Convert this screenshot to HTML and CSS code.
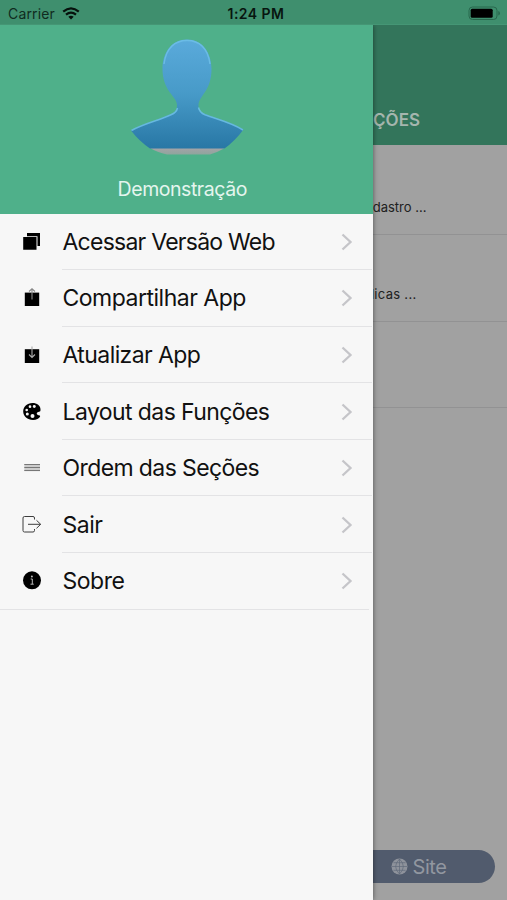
FILE: index.html
```html
<!DOCTYPE html>
<html lang="pt-BR">
<head>
<meta charset="utf-8">
<title>Menu</title>
<link rel="stylesheet" href="styles.css">
</head>
<body>
<div class="screen">
  <header class="status">
    <div class="carrier"><span>Carrier</span>
      <svg class="wifi" width="18" height="13" viewBox="0 0 18 13" fill="none" stroke="#06110c" stroke-width="2.2"><path d="M1.2 4.7Q9-1.8 16.8 4.7M4 7.7Q9 3.5 14 7.7"/><path d="M6.3 9.8Q9 7.8 11.7 9.8L9 12.6Z" fill="#06110c" stroke="none"/></svg>
    </div>
    <div class="clock">1:24 PM</div>
    <div class="power"><svg width="33" height="15" viewBox="0 0 33 15"><rect x="1" y="1" width="28" height="12.5" rx="3.5" fill="none" stroke="#28684d"/><rect x="2.7" y="2.7" width="22" height="9" rx="1.5" fill="#000"/><path d="M30.3 5v4.5q1.6-.5 1.6-2.25T30.3 5Z" fill="#28684d"/></svg></div>
  </header>
  <div class="stage">
    <aside class="drawer">
      <div class="profile">
        <svg class="avatar" width="120" height="120" viewBox="0 0 120 120">
          <defs>
            <linearGradient id="body" x1="0" y1="0" x2="0" y2="1"><stop offset="0" stop-color="#5aaadb"/><stop offset=".5" stop-color="#479ac8"/><stop offset="1" stop-color="#2877a5"/></linearGradient>
            <linearGradient id="base" x1="0" y1="0" x2="0" y2="1"><stop offset="0" stop-color="#a5a3a8"/><stop offset="1" stop-color="#8fa59d"/></linearGradient>
          </defs>
          <path d="M24 113H99Q92 117 84 119.5H41Q31 117 24 113Z" fill="url(#base)"/>
          <path d="M61 4.500C46 4.500 36.500 17 36.500 34C36.500 44 39.500 51 43.500 57C48 63 51 66 51 70.500C51 75 49 77.500 45 79C33 85 18 88 5 95.500Q13 106 24 113.500H98.500Q109 106 117.500 94.500C104 87 91 84 79 79C74 77 72.500 75 72.500 70.500C72.500 66 75 63 79 57C83 51 85.500 44 85.500 34C85.500 17 76 4.500 61 4.500Z" fill="url(#body)"/>
          <path d="M38 29C40 13 49 5.500 61 5.500S82 13 84 29M5.500 95.500C19 88 33 85.500 45 79.800Q50.500 77.500 51.500 73M72.500 72.500Q73.500 77.500 79 79.800C91 84.500 104 87 117 95" fill="none" stroke="#6fc0e8" stroke-width="1.500" opacity=".85"/>
        </svg>
        <div class="name">Demonstração</div>
      </div>
      <nav class="menu">
        <a class="item"><svg class="icon" viewBox="0 0 20 20"><path d="M5 1H18V14H15.500V4.200H5Z"/><path d="M1.200 5H14.500V17.700H1.200Z"/></svg><span class="label l1">Acessar Versão Web</span><svg class="chevron" viewBox="0 0 12 18"><path d="M1.500 1.500 9.500 9l-8 7.500"/></svg></a>
        <a class="item"><svg class="icon" viewBox="0 0 20 20"><path d="M2.800 4.600H17.200V18H2.800Z"/><path d="M10 11.500V1M7 3.500 10 .8 13 3.500" fill="none" stroke="#888" stroke-width="1.100"/></svg><span class="label l2">Compartilhar App</span><svg class="chevron" viewBox="0 0 12 18"><path d="M1.500 1.500 9.500 9l-8 7.500"/></svg></a>
        <a class="item"><svg class="icon" viewBox="0 0 20 20"><path d="M2.800 4.200H17.200V18H2.800Z"/><path d="M10 1.500V12M7 9.500 10 12.500 13 9.500" fill="none" stroke="#aaa" stroke-width="1.100"/></svg><span class="label l3">Atualizar App</span><svg class="chevron" viewBox="0 0 12 18"><path d="M1.500 1.500 9.500 9l-8 7.500"/></svg></a>
        <a class="item"><svg class="icon" viewBox="0 0 20 20"><path d="M10.500 1C5 1 1.200 4.700 1.200 9.500S5.500 18 11 18C14.500 18 17 16.500 18 14.700C18.700 13.200 16.500 13.500 15.500 12.800C14 11.700 15 10 17 9.800C18.300 9.700 18.500 9 18.500 7.500C18.500 3.500 15 1 10.500 1Z"/><g fill="#f7f7f7"><circle cx="8" cy="4.700" r="1.350"/><circle cx="12.300" cy="4.500" r="1.450"/><circle cx="4.700" cy="8" r="1.300"/><circle cx="5.300" cy="12" r="1.500"/><circle cx="10.500" cy="14" r="2"/></g></svg><span class="label l4">Layout das Funções</span><svg class="chevron" viewBox="0 0 12 18"><path d="M1.500 1.500 9.500 9l-8 7.500"/></svg></a>
        <a class="item"><svg class="icon" viewBox="0 0 20 20"><path d="M2.300 6H18V13.200H2.300Z" fill="#ccc"/><path d="M2.300 6.500H18M2.300 9.500H18M2.300 12.500H18" fill="none" stroke="#777" stroke-width="1.200"/></svg><span class="label l5">Ordem das Seções</span><svg class="chevron" viewBox="0 0 12 18"><path d="M1.500 1.500 9.500 9l-8 7.500"/></svg></a>
        <a class="item"><svg class="icon" viewBox="0 0 20 20"><path d="M12.500 4.500V3Q12.500 1.500 11 1.500H2.500Q1 1.500 1 3V15.500Q1 17 2.500 17H11Q12.500 17 12.500 15.500V14M6 9.300H18.500M14.500 5.300 18.700 9.300 14.500 13.300" fill="none" stroke="#3d3d3d" stroke-width="1"/></svg><span class="label l6">Sair</span><svg class="chevron" viewBox="0 0 12 18"><path d="M1.500 1.500 9.500 9l-8 7.500"/></svg></a>
        <a class="item"><svg class="icon" viewBox="0 0 20 20"><circle cx="10" cy="9.300" r="9"/><path d="M8.700 8H10.300V13M8.500 13.200H11.700" fill="none" stroke="#bbb" stroke-width="1"/><circle cx="9.900" cy="5.500" r="1" fill="#bbb"/></svg><span class="label l7">Sobre</span><svg class="chevron" viewBox="0 0 12 18"><path d="M1.500 1.500 9.500 9l-8 7.500"/></svg></a>
      </nav>
    </aside>
    <main class="page">
      <div class="title">FUNÇÕES</div>
      <div class="entry first"><span class="e1">Cadastro ...</span></div>
      <div class="entry"><span class="e2">Públicas ...</span></div>
      <div class="entry"></div>
      <div class="site"><svg width="17" height="17" viewBox="0 0 17 17"><circle cx="8.500" cy="8.500" r="8" fill="#8e929b"/><path d="M8.500 1V16M1 8.500H16M2.500 4.700H14.500M2.500 12.300H14.500M8.500 1Q.8 8.500 8.500 16M8.500 1Q16.200 8.500 8.500 16" fill="none" stroke="#606a7a" stroke-width=".7"/></svg><span>Site</span></div>
    </main>
  </div>
</div>
</body>
</html>
```

FILE: styles.css
```css
* { box-sizing: border-box; }
body { margin: 0; font-family: Inter, "Liberation Sans", sans-serif; }
.screen { width: 507px; height: 900px; display: flex; flex-direction: column; overflow: hidden; }
.status { height: 25px; flex: none; display: grid; grid-template-columns: 1fr 1fr 1fr; align-items: center; padding: 2px 6px 0 8px; background: #3f8f6e; border-bottom: 1px solid #459675; color: #102b20; font-size: 14px; }
.carrier { display: flex; align-items: center; gap: 7px; letter-spacing: .15px; }
.clock { text-align: center; font-weight: 600; letter-spacing: .45px; color: #07150f; padding-left: 3px; }
.power { display: flex; justify-content: flex-end; }
.stage { flex: 1; display: flex; min-height: 0; }
.drawer { width: 372.5px; flex: none; background: #f7f7f7; box-shadow: 0 0 5px rgba(0,0,0,.5); clip-path: inset(0 -10px 0 0); z-index: 1; }
.profile { height: 188.5px; background: #4fb08a; display: flex; flex-direction: column; align-items: center; padding-top: 10px; }
.avatar { display: block; flex: none; }
.name { margin-top: 20.5px; padding-right: 8px; line-height: 26px; font-size: 19.5px; letter-spacing: -.45px; color: #e5f5ee; }
.item { height: 56.6px; display: flex; align-items: center; padding: 0 20px 0 21.5px; background: linear-gradient(#e3e3e5, #e3e3e5) 62px 100% / 310px 1px no-repeat; }
.item:last-child { background-position: 0 100%; background-size: 369px 1px; }
.icon { width: 20px; height: 20px; flex: none; }
.label { flex: 1; margin-left: 21px; font-size: 23px; line-height: 30px; letter-spacing: -.5px; white-space: nowrap; color: #111; }
.l1 { letter-spacing: -.75px; }
.l2 { letter-spacing: -.5px; }
.l3 { letter-spacing: -.58px; }
.l4 { letter-spacing: -.59px; }
.l5 { letter-spacing: -.6px; }
.chevron { width: 12px; height: 18px; flex: none; fill: none; stroke: #c5c5c9; stroke-width: 2.3; }
.page { flex: 1; min-width: 0; background: #a1a1a1; display: flex; flex-direction: column; }
.title { height: 120px; background: #33755b; color: #a5b6ae; font-size: 17px; font-weight: 600; line-height: 22px; padding: 84px 87px 0 0; display: flex; justify-content: flex-end; }
.entry { height: 86.5px; flex: none; border-bottom: 1px solid #929293; color: #202020; font-size: 13px; line-height: 18px; padding-top: 49.5px; display: flex; justify-content: flex-end; }
.entry.first { height: 90px; padding-top: 52.5px; }
.entry span { white-space: nowrap; }
.e1 { margin-right: 80.5px; }
.e2 { margin-right: 90.5px; letter-spacing: .3px; }
.site { margin: auto 12px 17px -20px; height: 33.5px; border-radius: 0 17px 17px 0; background: #515b6d; color: #9297a0; display: flex; align-items: center; padding: 1px 0 0 38px; gap: 5px; font-size: 20px; letter-spacing: -.45px; }
```
